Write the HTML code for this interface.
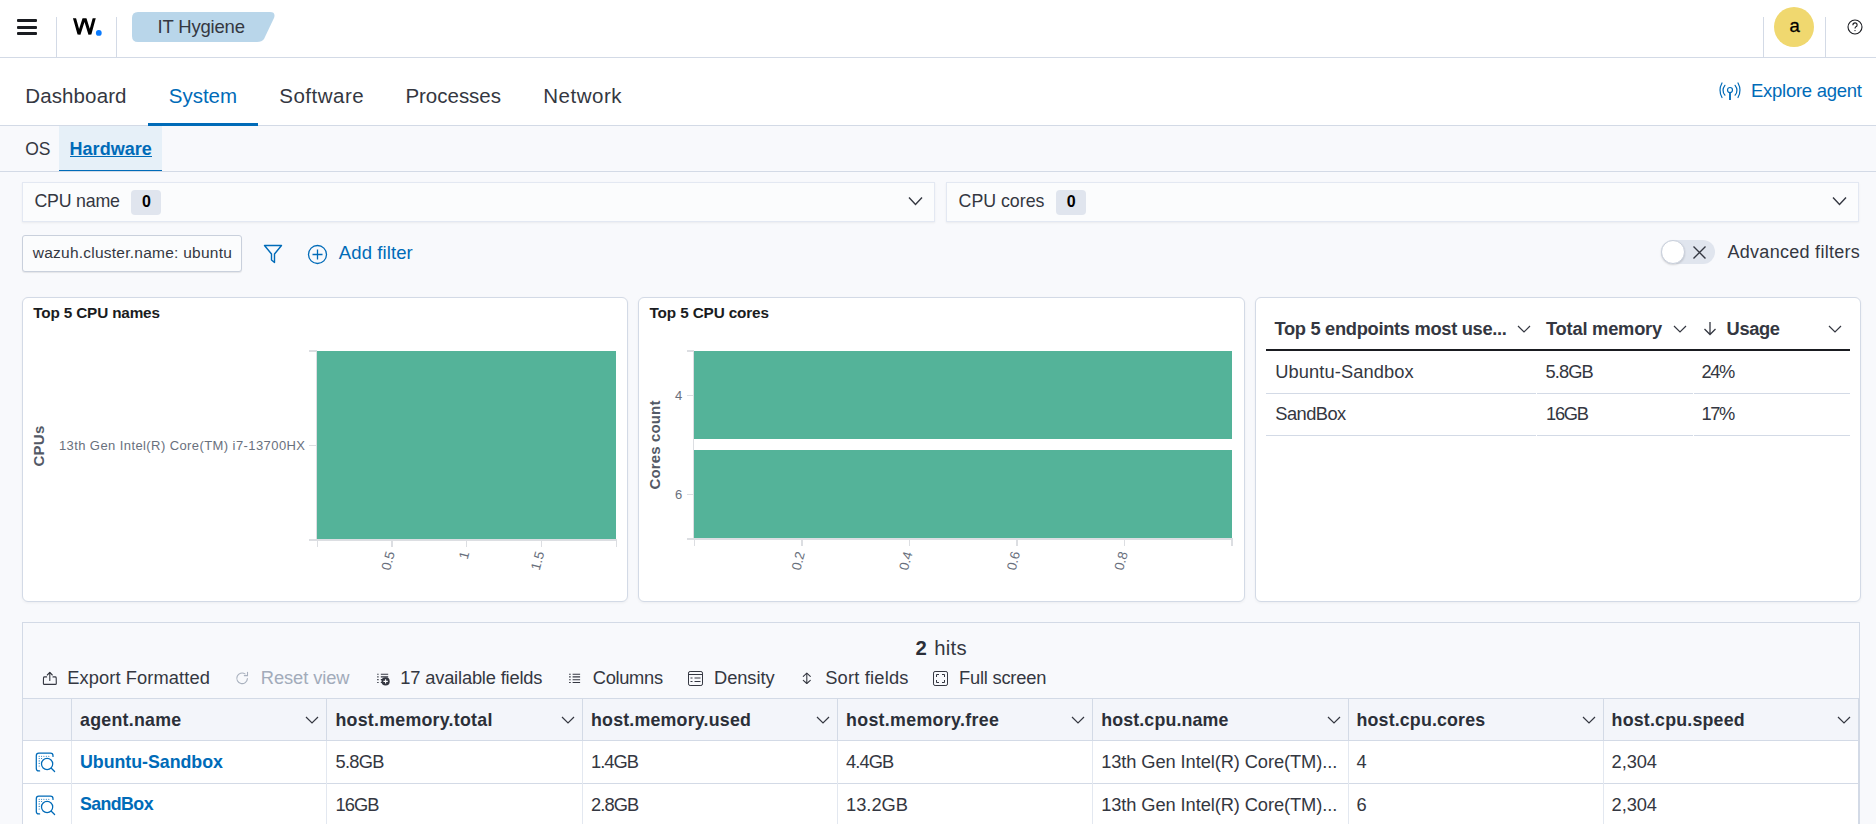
<!DOCTYPE html>
<html><head><meta charset="utf-8"><style>
html,body{margin:0;padding:0;}
body{width:1876px;height:824px;overflow:hidden;position:relative;background:#fff;font-family:"Liberation Sans",sans-serif;color:#343741;}
.t{position:absolute;white-space:nowrap;line-height:1;}
</style></head><body>
<div style="position:absolute;left:0px;top:0px;width:1876px;height:57px;background:#fff;"></div>
<div style="position:absolute;left:0px;top:57px;width:1876px;height:1px;background:#D3DAE6;"></div>
<div style="position:absolute;left:17px;top:19.4px;width:20px;height:2.5px;background:#1a1c21;border-radius:1px;"></div>
<div style="position:absolute;left:17px;top:26px;width:20px;height:2.5px;background:#1a1c21;border-radius:1px;"></div>
<div style="position:absolute;left:17px;top:32.4px;width:20px;height:2.5px;background:#1a1c21;border-radius:1px;"></div>
<div style="position:absolute;left:56px;top:17px;width:1px;height:40px;background:#D3DAE6;"></div>
<div style="position:absolute;left:116px;top:17px;width:1px;height:40px;background:#D3DAE6;"></div>
<div style="position:absolute;left:1763px;top:17px;width:1px;height:40px;background:#D3DAE6;"></div>
<div style="position:absolute;left:1825px;top:17px;width:1px;height:40px;background:#D3DAE6;"></div>
<svg style="position:absolute;left:0;top:0" width="110" height="50"><defs><clipPath id="wc"><rect x="60" y="18.2" width="45" height="17"/></clipPath></defs><polyline clip-path="url(#wc)" points="73.9,16 79,34.2 84.5,17 89.9,34.2 94.8,16" fill="none" stroke="#000" stroke-width="3" stroke-linejoin="miter" stroke-miterlimit="3"/><circle cx="98.8" cy="32.9" r="2.9" fill="#0A7BFF"/></svg>
<svg style="position:absolute;left:130px;top:10px" width="150" height="34"><path d="M8 2 H140 Q146 2 144 8 L134 29 Q132 32 127 32 H8 Q2 32 2 26 V8 Q2 2 8 2 Z" fill="#B9D6EA"/></svg>
<div class="t" style="left:157.60px;top:18.23px;font-size:18.5px;letter-spacing:-0.191px;">IT Hygiene</div>
<div style="position:absolute;left:1774px;top:7px;width:40px;height:40px;border-radius:50%;background:#F0D86F;"></div>
<div class="t" style="left:1789.50px;top:17.33px;font-size:18.5px;color:#000;-webkit-text-stroke:0.3px #000;">a</div>
<svg style="position:absolute;left:1846px;top:18px" width="18" height="18" viewBox="0 0 18 18"><circle cx="9" cy="9" r="7" fill="none" stroke="#1a1c21" stroke-width="1.1"/><path d="M6.9 7.2 Q6.9 4.9 9 4.9 Q11.1 4.9 11.1 6.9 Q11.1 8.2 9.9 8.8 Q9 9.3 9 10.6" fill="none" stroke="#1a1c21" stroke-width="1.1"/><circle cx="9" cy="12.6" r="0.7" fill="#1a1c21"/></svg>
<div style="position:absolute;left:0px;top:58px;width:1876px;height:67px;background:#fff;"></div>
<div style="position:absolute;left:0px;top:125px;width:1876px;height:1px;background:#D3DAE6;"></div>
<div class="t" style="left:25.30px;top:85.64px;font-size:20.5px;letter-spacing:0.114px;">Dashboard</div>
<div class="t" style="left:168.80px;top:85.64px;font-size:20.5px;letter-spacing:-0.029px;color:#006BB8;">System</div>
<div style="position:absolute;left:148px;top:123px;width:110px;height:3px;background:#006BB8;"></div>
<div class="t" style="left:279.20px;top:85.64px;font-size:20.5px;letter-spacing:0.515px;">Software</div>
<div class="t" style="left:405.40px;top:85.64px;font-size:20.5px;letter-spacing:-0.012px;">Processes</div>
<div class="t" style="left:543.20px;top:85.64px;font-size:20.5px;letter-spacing:0.527px;">Network</div>
<svg style="position:absolute;left:1716px;top:80px" width="28" height="22" viewBox="0 0 28 22"><g fill="none" stroke="#006BB8" stroke-width="1.2" stroke-linecap="round"><path d="M6 3 Q2 10.3 6 17.5"/><path d="M8.9 5.3 Q5.1 10.3 8.9 15.2"/><path d="M22 3 Q26 10.3 22 17.5"/><path d="M19.1 5.3 Q22.9 10.3 19.1 15.2"/><circle cx="14" cy="10" r="2.5"/></g><path d="M14 12.5 V20" stroke="#006BB8" stroke-width="1.8"/></svg>
<div class="t" style="left:1751.00px;top:82.23px;font-size:18.5px;letter-spacing:-0.264px;color:#006BB8;">Explore agent</div>
<div style="position:absolute;left:0px;top:126px;width:1876px;height:698px;background:#F8F9FC;"></div>
<div style="position:absolute;left:59px;top:126px;width:103px;height:45px;background:#E6F0F8;"></div>
<div style="position:absolute;left:59px;top:170px;width:103px;height:2px;background:#006BB8;"></div>
<div style="position:absolute;left:0px;top:171px;width:1876px;height:1px;background:#D3DAE6;"></div>
<div class="t" style="left:25.20px;top:140.78px;font-size:17.5px;">OS</div>
<div class="t" style="left:69.50px;top:139.75px;font-size:18px;font-weight:700;letter-spacing:0.037px;color:#006BB8;">Hardware</div>
<div style="position:absolute;left:69.5px;top:156px;width:82.5px;height:1.3px;background:#006BB8;"></div>
<div style="position:absolute;left:22px;top:182px;width:913px;height:40px;background:#FBFCFD;border:1px solid #E3E8F2;box-sizing:border-box;box-shadow:0 1px 2px rgba(0,0,0,0.06);"></div>
<div class="t" style="left:34.40px;top:192.92px;font-size:17.8px;letter-spacing:-0.209px;">CPU name</div>
<div style="position:absolute;left:131.2px;top:190px;width:30px;height:24.5px;background:#E0E5EE;border-radius:4px;"></div>
<div class="t" style="left:141.90px;top:193.65px;font-size:16px;font-weight:700;color:#000;">0</div>
<div style="position:absolute;left:946px;top:182px;width:913px;height:40px;background:#FBFCFD;border:1px solid #E3E8F2;box-sizing:border-box;box-shadow:0 1px 2px rgba(0,0,0,0.06);"></div>
<div class="t" style="left:958.60px;top:192.92px;font-size:17.8px;letter-spacing:-0.020px;">CPU cores</div>
<div style="position:absolute;left:1056px;top:190px;width:30px;height:24.5px;background:#E0E5EE;border-radius:4px;"></div>
<div class="t" style="left:1066.70px;top:193.65px;font-size:16px;font-weight:700;color:#000;">0</div>
<svg style="position:absolute;left:907.6px;top:196px" width="16" height="11" viewBox="0 0 16 11"><path d="M1 1.5 L7.5 8.5 L14 1.5" fill="none" stroke="#343741" stroke-width="1.4"/></svg>
<svg style="position:absolute;left:1831.6px;top:196px" width="16" height="11" viewBox="0 0 16 11"><path d="M1 1.5 L7.5 8.5 L14 1.5" fill="none" stroke="#343741" stroke-width="1.4"/></svg>
<div style="position:absolute;left:22px;top:235px;width:220px;height:37px;background:#FBFCFD;border:1px solid #C9D0DC;border-radius:3px;box-sizing:border-box;box-shadow:0 1px 1px rgba(0,0,0,0.08);"></div>
<div class="t" style="left:32.73px;top:244.87px;font-size:15.5px;letter-spacing:0.243px;">wazuh.cluster.name: ubuntu</div>
<svg style="position:absolute;left:262px;top:243px" width="22" height="22" viewBox="0 0 22 22"><path d="M2.5 2.5 H19.5 L12.5 11 V19.5 L9.5 17 V11 Z" fill="none" stroke="#006BB8" stroke-width="1.4" stroke-linejoin="round"/></svg>
<svg style="position:absolute;left:306px;top:243px" width="23" height="23" viewBox="0 0 23 23"><circle cx="11.5" cy="11.5" r="9" fill="none" stroke="#006BB8" stroke-width="1.3"/><path d="M11.5 6.5 V16.5 M6.5 11.5 H16.5" stroke="#006BB8" stroke-width="1.3"/></svg>
<div class="t" style="left:338.80px;top:244.33px;font-size:18.5px;letter-spacing:0.100px;color:#006BB8;">Add filter</div>
<div style="position:absolute;left:1661px;top:240px;width:54px;height:24px;background:#E0E5EE;border-radius:12px;"></div>
<div style="position:absolute;left:1661px;top:240px;width:24px;height:24px;border-radius:50%;background:#fff;border:1px solid #C9D0DC;box-sizing:border-box;box-shadow:0 1px 2px rgba(0,0,0,0.15);"></div>
<svg style="position:absolute;left:1691px;top:244px" width="17" height="17" viewBox="0 0 17 17"><path d="M2.5 2.5 L14.5 14.5 M14.5 2.5 L2.5 14.5" stroke="#343741" stroke-width="1.4"/></svg>
<div class="t" style="left:1727.50px;top:243.35px;font-size:18px;letter-spacing:0.282px;">Advanced filters</div>
<div style="position:absolute;left:22px;top:297px;width:606px;height:305px;background:#fff;border:1px solid #D3DAE6;border-radius:6px;box-sizing:border-box;box-shadow:0 1px 3px rgba(0,0,0,0.05);"></div>
<div style="position:absolute;left:638px;top:297px;width:607px;height:305px;background:#fff;border:1px solid #D3DAE6;border-radius:6px;box-sizing:border-box;box-shadow:0 1px 3px rgba(0,0,0,0.05);"></div>
<div style="position:absolute;left:1255px;top:297px;width:606px;height:305px;background:#fff;border:1px solid #D3DAE6;border-radius:6px;box-sizing:border-box;box-shadow:0 1px 3px rgba(0,0,0,0.05);"></div>
<div class="t" style="left:33.30px;top:305.04px;font-size:15.3px;font-weight:700;letter-spacing:-0.161px;color:#1a1c21;">Top 5 CPU names</div>
<div class="t" style="left:649.50px;top:305.04px;font-size:15.3px;font-weight:700;letter-spacing:-0.128px;color:#1a1c21;">Top 5 CPU cores</div>
<div style="position:absolute;left:317px;top:351px;width:299px;height:188px;background:#54B399;"></div>
<div style="position:absolute;left:309px;top:539px;width:308px;height:2px;background:#DCDEE2;"></div>
<div style="position:absolute;left:316px;top:351px;width:1px;height:190px;background:#DCDEE2;"></div>
<div style="position:absolute;left:309px;top:350px;width:8px;height:1.5px;background:#DCDEE2;"></div>
<div style="position:absolute;left:309px;top:445px;width:8px;height:1px;background:#DCDEE2;"></div>
<div style="position:absolute;left:316.5px;top:540px;width:1.5px;height:7px;background:#DCDEE2;"></div>
<div style="position:absolute;left:391.0px;top:540px;width:1.5px;height:7px;background:#DCDEE2;"></div>
<div style="position:absolute;left:465.5px;top:540px;width:1.5px;height:7px;background:#DCDEE2;"></div>
<div style="position:absolute;left:540.5px;top:540px;width:1.5px;height:7px;background:#DCDEE2;"></div>
<div style="position:absolute;left:615.5px;top:540px;width:1.5px;height:7px;background:#DCDEE2;"></div>
<div class="t" style="left:58.90px;top:438.99px;font-size:13px;letter-spacing:0.414px;color:#69707D;">13th Gen Intel(R) Core(TM) i7-13700HX</div>
<div class="t" style="left:37.8px;top:445.5px;font-size:15px;font-weight:700;color:#535966;transform:translate(-50%,-50%) rotate(-90deg);white-space:nowrap;line-height:15px;letter-spacing:0.3px">CPUs</div>
<svg style="position:absolute;left:0;top:0" width="1876" height="824"><text x="391.5" y="552" transform="rotate(-75 391.5 552)" text-anchor="end" dominant-baseline="middle" font-family="Liberation Sans" font-size="13.4" fill="#69707D">0.5</text><text x="466" y="552" transform="rotate(-75 466 552)" text-anchor="end" dominant-baseline="middle" font-family="Liberation Sans" font-size="13.4" fill="#69707D">1</text><text x="541" y="552" transform="rotate(-75 541 552)" text-anchor="end" dominant-baseline="middle" font-family="Liberation Sans" font-size="13.4" fill="#69707D">1.5</text><text x="801.6" y="552" transform="rotate(-75 801.6 552)" text-anchor="end" dominant-baseline="middle" font-family="Liberation Sans" font-size="13.4" fill="#69707D">0.2</text><text x="909.2" y="552" transform="rotate(-75 909.2 552)" text-anchor="end" dominant-baseline="middle" font-family="Liberation Sans" font-size="13.4" fill="#69707D">0.4</text><text x="1016.8" y="552" transform="rotate(-75 1016.8 552)" text-anchor="end" dominant-baseline="middle" font-family="Liberation Sans" font-size="13.4" fill="#69707D">0.6</text><text x="1124.4" y="552" transform="rotate(-75 1124.4 552)" text-anchor="end" dominant-baseline="middle" font-family="Liberation Sans" font-size="13.4" fill="#69707D">0.8</text></svg>
<div style="position:absolute;left:694px;top:351px;width:538px;height:88px;background:#54B399;"></div>
<div style="position:absolute;left:694px;top:450px;width:538px;height:88px;background:#54B399;"></div>
<div style="position:absolute;left:687px;top:538px;width:546px;height:2px;background:#DCDEE2;"></div>
<div style="position:absolute;left:693px;top:351px;width:1px;height:189px;background:#DCDEE2;"></div>
<div style="position:absolute;left:687px;top:350px;width:7px;height:1.5px;background:#DCDEE2;"></div>
<div style="position:absolute;left:687px;top:395px;width:7px;height:1px;background:#DCDEE2;"></div>
<div style="position:absolute;left:687px;top:494px;width:7px;height:1px;background:#DCDEE2;"></div>
<div style="position:absolute;left:693.5px;top:539px;width:1.5px;height:7px;background:#DCDEE2;"></div>
<div style="position:absolute;left:801.1px;top:539px;width:1.5px;height:7px;background:#DCDEE2;"></div>
<div style="position:absolute;left:908.7px;top:539px;width:1.5px;height:7px;background:#DCDEE2;"></div>
<div style="position:absolute;left:1016.3px;top:539px;width:1.5px;height:7px;background:#DCDEE2;"></div>
<div style="position:absolute;left:1123.9px;top:539px;width:1.5px;height:7px;background:#DCDEE2;"></div>
<div style="position:absolute;left:1231.0px;top:539px;width:1.5px;height:7px;background:#DCDEE2;"></div>
<div class="t" style="left:675.00px;top:388.99px;font-size:13px;color:#69707D;">4</div>
<div class="t" style="left:675.00px;top:487.99px;font-size:13px;color:#69707D;">6</div>
<div class="t" style="left:653.5px;top:444.5px;font-size:15px;font-weight:700;color:#535966;transform:translate(-50%,-50%) rotate(-90deg);white-space:nowrap;line-height:15px;letter-spacing:0.15px">Cores count</div>
<div style="position:absolute;left:1266px;top:349px;width:584px;height:2px;background:#1a1c21;"></div>
<div style="position:absolute;left:1266px;top:393px;width:270px;height:1px;background:#D3DAE6;"></div>
<div style="position:absolute;left:1537px;top:393px;width:156px;height:1px;background:#D3DAE6;"></div>
<div style="position:absolute;left:1694px;top:393px;width:156px;height:1px;background:#D3DAE6;"></div>
<div style="position:absolute;left:1266px;top:435px;width:270px;height:1px;background:#D3DAE6;"></div>
<div style="position:absolute;left:1537px;top:435px;width:156px;height:1px;background:#D3DAE6;"></div>
<div style="position:absolute;left:1694px;top:435px;width:156px;height:1px;background:#D3DAE6;"></div>
<div class="t" style="left:1274.40px;top:319.70px;font-size:18.3px;font-weight:700;letter-spacing:-0.301px;">Top 5 endpoints most use...</div>
<div class="t" style="left:1546.00px;top:319.70px;font-size:18.3px;font-weight:700;letter-spacing:-0.213px;">Total memory</div>
<div class="t" style="left:1726.60px;top:319.70px;font-size:18.3px;font-weight:700;letter-spacing:-0.380px;">Usage</div>
<svg style="position:absolute;left:1516.5px;top:324.5px" width="14" height="9" viewBox="0 0 14 9"><path d="M1 1 L7.0 7 L13 1" fill="none" stroke="#343741" stroke-width="1.2"/></svg>
<svg style="position:absolute;left:1672.5px;top:324.5px" width="14" height="9" viewBox="0 0 14 9"><path d="M1 1 L7.0 7 L13 1" fill="none" stroke="#343741" stroke-width="1.2"/></svg>
<svg style="position:absolute;left:1828px;top:324.5px" width="14" height="9" viewBox="0 0 14 9"><path d="M1 1 L7.0 7 L13 1" fill="none" stroke="#343741" stroke-width="1.2"/></svg>
<svg style="position:absolute;left:1702px;top:321px" width="16" height="15" viewBox="0 0 16 15"><path d="M8 1 V13.5 M2.5 8 L8 13.5 L13.5 8" fill="none" stroke="#343741" stroke-width="1.3"/></svg>
<div class="t" style="left:1275.30px;top:363.00px;font-size:18.3px;letter-spacing:0.081px;">Ubuntu-Sandbox</div>
<div class="t" style="left:1545.50px;top:363.00px;font-size:18.3px;letter-spacing:-0.920px;">5.8GB</div>
<div class="t" style="left:1701.50px;top:363.00px;font-size:18.3px;letter-spacing:-1.359px;">24%</div>
<div class="t" style="left:1275.30px;top:405.00px;font-size:18.3px;letter-spacing:-0.547px;">SandBox</div>
<div class="t" style="left:1546.00px;top:405.00px;font-size:18.3px;letter-spacing:-1.264px;">16GB</div>
<div class="t" style="left:1701.60px;top:405.00px;font-size:18.3px;letter-spacing:-1.409px;">17%</div>
<div style="position:absolute;left:22px;top:622px;width:1838px;height:202px;background:#F8F9FC;border:1px solid #D3DAE6;border-bottom:none;box-sizing:border-box;"></div>
<div style="position:absolute;left:23px;top:698px;width:1836px;height:1px;background:#D3DAE6;"></div>
<div style="position:absolute;left:23px;top:699px;width:1835px;height:41px;background:#F3F5FA;"></div>
<div style="position:absolute;left:23px;top:740px;width:1835px;height:1px;background:#D3DAE6;"></div>
<div style="position:absolute;left:23px;top:741px;width:1835px;height:83px;background:#fff;"></div>
<div style="position:absolute;left:23px;top:783px;width:1835px;height:1px;background:#D3DAE6;"></div>
<div style="position:absolute;left:1858px;top:698px;width:1px;height:126px;background:#D3DAE6;"></div>
<div style="position:absolute;left:71px;top:699px;width:1px;height:41px;background:#D3DAE6;"></div>
<div style="position:absolute;left:71px;top:741px;width:1px;height:83px;background:#E3E8F0;"></div>
<div style="position:absolute;left:326px;top:699px;width:1px;height:41px;background:#D3DAE6;"></div>
<div style="position:absolute;left:326px;top:741px;width:1px;height:83px;background:#E3E8F0;"></div>
<div style="position:absolute;left:582px;top:699px;width:1px;height:41px;background:#D3DAE6;"></div>
<div style="position:absolute;left:582px;top:741px;width:1px;height:83px;background:#E3E8F0;"></div>
<div style="position:absolute;left:837px;top:699px;width:1px;height:41px;background:#D3DAE6;"></div>
<div style="position:absolute;left:837px;top:741px;width:1px;height:83px;background:#E3E8F0;"></div>
<div style="position:absolute;left:1092px;top:699px;width:1px;height:41px;background:#D3DAE6;"></div>
<div style="position:absolute;left:1092px;top:741px;width:1px;height:83px;background:#E3E8F0;"></div>
<div style="position:absolute;left:1348px;top:699px;width:1px;height:41px;background:#D3DAE6;"></div>
<div style="position:absolute;left:1348px;top:741px;width:1px;height:83px;background:#E3E8F0;"></div>
<div style="position:absolute;left:1603px;top:699px;width:1px;height:41px;background:#D3DAE6;"></div>
<div style="position:absolute;left:1603px;top:741px;width:1px;height:83px;background:#E3E8F0;"></div>
<div class="t" style="left:915.50px;top:638.31px;font-size:20.3px;font-weight:700;color:#2B2F38;">2</div>
<div class="t" style="left:934.20px;top:638.31px;font-size:20.3px;letter-spacing:0.271px;">hits</div>
<div class="t" style="left:67.30px;top:668.50px;font-size:18.3px;letter-spacing:0.089px;">Export Formatted</div>
<div class="t" style="left:260.80px;top:668.50px;font-size:18.3px;letter-spacing:-0.082px;color:#A2ABBA;">Reset view</div>
<div class="t" style="left:400.30px;top:668.50px;font-size:18.3px;letter-spacing:-0.177px;">17 available fields</div>
<div class="t" style="left:592.80px;top:668.50px;font-size:18.3px;letter-spacing:-0.319px;">Columns</div>
<div class="t" style="left:714.00px;top:668.50px;font-size:18.3px;letter-spacing:-0.069px;">Density</div>
<div class="t" style="left:825.20px;top:668.50px;font-size:18.3px;letter-spacing:0.204px;">Sort fields</div>
<div class="t" style="left:959.00px;top:668.50px;font-size:18.3px;letter-spacing:-0.211px;">Full screen</div>
<svg style="position:absolute;left:36px;top:664px" width="30" height="28" viewBox="0 0 30 28"><g fill="none" stroke="#343741" stroke-width="1.1" stroke-linecap="round" stroke-linejoin="round"><path d="M13.8 8.6 V16.4"/><path d="M11.3 11 L13.8 8.4 L16.3 11"/><path d="M10.6 12.9 H8.6 Q7.6 12.9 7.5 13.9 L7.4 19.4 Q7.4 20.4 8.4 20.4 H19.3 Q20.3 20.4 20.3 19.4 L20.2 13.9 Q20.1 12.9 19.1 12.9 H17"/></g></svg>
<svg style="position:absolute;left:228px;top:664px" width="30" height="28" viewBox="0 0 30 28"><g fill="none" stroke="#A9B1BE" stroke-width="1.1" stroke-linecap="round"><path d="M19.4 14.6 A5.3 5.3 0 1 1 17 9.9"/><path d="M19.5 8.3 V11.6 H16.3"/></g></svg>
<svg style="position:absolute;left:370px;top:664px" width="30" height="28" viewBox="0 0 30 28"><g stroke="#343741" stroke-width="1.1"><path d="M7.2 10.2 H8.6 M7.2 12.9 H8.6 M7.2 15.6 H8.6 M7.2 18.5 H8.6 M10.8 10.2 H18.2 M10.8 12.9 H18.2 M10.8 15.6 H12 M10.8 18.5 H12"/></g><circle cx="15.6" cy="17.4" r="4.1" fill="#343741"/><path d="M15.6 15.2 V19.6 M13.4 17.4 H17.8" stroke="#fff" stroke-width="1.1"/></svg>
<svg style="position:absolute;left:562px;top:664px" width="30" height="28" viewBox="0 0 30 28"><g stroke="#343741" stroke-width="1.1"><path d="M7.1 10.2 H8.7 M7.1 12.9 H8.7 M7.1 15.7 H8.7 M7.1 18.5 H8.7 M10.6 10.2 H18.1 M10.6 12.9 H18.1 M10.6 15.7 H18.1 M10.6 18.5 H18.1"/></g></svg>
<svg style="position:absolute;left:682px;top:664px" width="30" height="28" viewBox="0 0 30 28"><g fill="none" stroke="#343741" stroke-width="1"><rect x="6.5" y="7.5" width="14" height="14" rx="1.6"/><path d="M6.5 10.5 H20.5 M8.5 14 H10.5 M12.5 14 H18.5 M8.5 17.5 H10.5 M12.5 17.5 H18.5"/></g></svg>
<svg style="position:absolute;left:792px;top:664px" width="30" height="28" viewBox="0 0 30 28"><g fill="none" stroke="#343741" stroke-width="1.1" stroke-linecap="round" stroke-linejoin="round"><path d="M11.3 12.4 L14.8 9.2 L18.3 12.4"/><path d="M11.3 16.3 L14.8 19.5 L18.3 16.3"/><path d="M14.8 9.6 V19.1"/></g></svg>
<svg style="position:absolute;left:926px;top:664px" width="30" height="28" viewBox="0 0 30 28"><g fill="none" stroke="#343741" stroke-width="1"><rect x="7.5" y="7.5" width="14" height="14" rx="1.6"/><path d="M10.5 13 V10.5 H13 M16 10.5 H18.5 V13 M10.5 16 V18.5 H13 M16 18.5 H18.5 V16"/></g></svg>
<div class="t" style="left:80.00px;top:712.22px;font-size:17.8px;font-weight:700;letter-spacing:0.254px;color:#2B2F38;">agent.name</div>
<div class="t" style="left:335.50px;top:712.22px;font-size:17.8px;font-weight:700;letter-spacing:0.252px;color:#2B2F38;">host.memory.total</div>
<div class="t" style="left:591.00px;top:712.22px;font-size:17.8px;font-weight:700;letter-spacing:0.204px;color:#2B2F38;">host.memory.used</div>
<div class="t" style="left:846.00px;top:712.22px;font-size:17.8px;font-weight:700;letter-spacing:0.330px;color:#2B2F38;">host.memory.free</div>
<div class="t" style="left:1101.20px;top:712.22px;font-size:17.8px;font-weight:700;letter-spacing:0.140px;color:#2B2F38;">host.cpu.name</div>
<div class="t" style="left:1356.60px;top:712.22px;font-size:17.8px;font-weight:700;letter-spacing:0.153px;color:#2B2F38;">host.cpu.cores</div>
<div class="t" style="left:1611.60px;top:712.22px;font-size:17.8px;font-weight:700;letter-spacing:0.203px;color:#2B2F38;">host.cpu.speed</div>
<svg style="position:absolute;left:305px;top:715.5px" width="14" height="9" viewBox="0 0 14 9"><path d="M1 1 L7.0 7 L13 1" fill="none" stroke="#343741" stroke-width="1.2"/></svg>
<svg style="position:absolute;left:561px;top:715.5px" width="14" height="9" viewBox="0 0 14 9"><path d="M1 1 L7.0 7 L13 1" fill="none" stroke="#343741" stroke-width="1.2"/></svg>
<svg style="position:absolute;left:816px;top:715.5px" width="14" height="9" viewBox="0 0 14 9"><path d="M1 1 L7.0 7 L13 1" fill="none" stroke="#343741" stroke-width="1.2"/></svg>
<svg style="position:absolute;left:1071px;top:715.5px" width="14" height="9" viewBox="0 0 14 9"><path d="M1 1 L7.0 7 L13 1" fill="none" stroke="#343741" stroke-width="1.2"/></svg>
<svg style="position:absolute;left:1327px;top:715.5px" width="14" height="9" viewBox="0 0 14 9"><path d="M1 1 L7.0 7 L13 1" fill="none" stroke="#343741" stroke-width="1.2"/></svg>
<svg style="position:absolute;left:1582px;top:715.5px" width="14" height="9" viewBox="0 0 14 9"><path d="M1 1 L7.0 7 L13 1" fill="none" stroke="#343741" stroke-width="1.2"/></svg>
<svg style="position:absolute;left:1837px;top:715.5px" width="14" height="9" viewBox="0 0 14 9"><path d="M1 1 L7.0 7 L13 1" fill="none" stroke="#343741" stroke-width="1.2"/></svg>
<div class="t" style="left:80.00px;top:753.72px;font-size:17.8px;font-weight:700;letter-spacing:-0.028px;color:#006BB8;">Ubuntu-Sandbox</div>
<div class="t" style="left:335.50px;top:753.30px;font-size:18.3px;letter-spacing:-0.695px;">5.8GB</div>
<div class="t" style="left:591.00px;top:753.30px;font-size:18.3px;letter-spacing:-0.945px;">1.4GB</div>
<div class="t" style="left:846.00px;top:753.30px;font-size:18.3px;letter-spacing:-0.895px;">4.4GB</div>
<div class="t" style="left:1101.20px;top:753.30px;font-size:18.3px;letter-spacing:-0.096px;">13th Gen Intel(R) Core(TM)...</div>
<div class="t" style="left:1356.60px;top:753.30px;font-size:18.3px;">4</div>
<div class="t" style="left:1611.60px;top:753.30px;font-size:18.3px;letter-spacing:-0.097px;">2,304</div>
<svg style="position:absolute;left:28px;top:745.5px" width="36" height="35" viewBox="0 0 36 35"><g fill="none" stroke="#006BB8" stroke-width="1.25" stroke-linecap="round"><path d="M11.6 24.9 H10.8 Q8.3 24.9 8.3 22.4 V9.7 Q8.3 7.2 10.8 7.2 H22.5 Q25 7.2 25 9.7 V10.4"/><circle cx="19.1" cy="18" r="5.6"/><path d="M23.3 22.2 L26.6 25.5"/></g><g fill="#006BB8"><circle cx="11.2" cy="10.2" r="0.55"/><circle cx="13.6" cy="10.2" r="0.55"/><circle cx="15.9" cy="10.2" r="0.55"/><circle cx="18.3" cy="10.2" r="0.55"/><circle cx="20.8" cy="10.2" r="0.55"/><circle cx="11.2" cy="12.5" r="0.55"/><circle cx="13.6" cy="12.5" r="0.55"/><circle cx="11.2" cy="14.9" r="0.55"/><circle cx="11.2" cy="17.4" r="0.55"/><circle cx="11.2" cy="20" r="0.55"/></g></svg>
<div class="t" style="left:80.00px;top:796.32px;font-size:17.8px;font-weight:700;letter-spacing:-0.591px;color:#006BB8;">SandBox</div>
<div class="t" style="left:335.50px;top:795.90px;font-size:18.3px;letter-spacing:-0.931px;">16GB</div>
<div class="t" style="left:591.00px;top:795.90px;font-size:18.3px;letter-spacing:-0.920px;">2.8GB</div>
<div class="t" style="left:846.00px;top:795.90px;font-size:18.3px;">13.2GB</div>
<div class="t" style="left:1101.20px;top:795.90px;font-size:18.3px;letter-spacing:-0.096px;">13th Gen Intel(R) Core(TM)...</div>
<div class="t" style="left:1356.60px;top:795.90px;font-size:18.3px;">6</div>
<div class="t" style="left:1611.60px;top:795.90px;font-size:18.3px;letter-spacing:-0.097px;">2,304</div>
<svg style="position:absolute;left:28px;top:788.5px" width="36" height="35" viewBox="0 0 36 35"><g fill="none" stroke="#006BB8" stroke-width="1.25" stroke-linecap="round"><path d="M11.6 24.9 H10.8 Q8.3 24.9 8.3 22.4 V9.7 Q8.3 7.2 10.8 7.2 H22.5 Q25 7.2 25 9.7 V10.4"/><circle cx="19.1" cy="18" r="5.6"/><path d="M23.3 22.2 L26.6 25.5"/></g><g fill="#006BB8"><circle cx="11.2" cy="10.2" r="0.55"/><circle cx="13.6" cy="10.2" r="0.55"/><circle cx="15.9" cy="10.2" r="0.55"/><circle cx="18.3" cy="10.2" r="0.55"/><circle cx="20.8" cy="10.2" r="0.55"/><circle cx="11.2" cy="12.5" r="0.55"/><circle cx="13.6" cy="12.5" r="0.55"/><circle cx="11.2" cy="14.9" r="0.55"/><circle cx="11.2" cy="17.4" r="0.55"/><circle cx="11.2" cy="20" r="0.55"/></g></svg>
</body></html>
